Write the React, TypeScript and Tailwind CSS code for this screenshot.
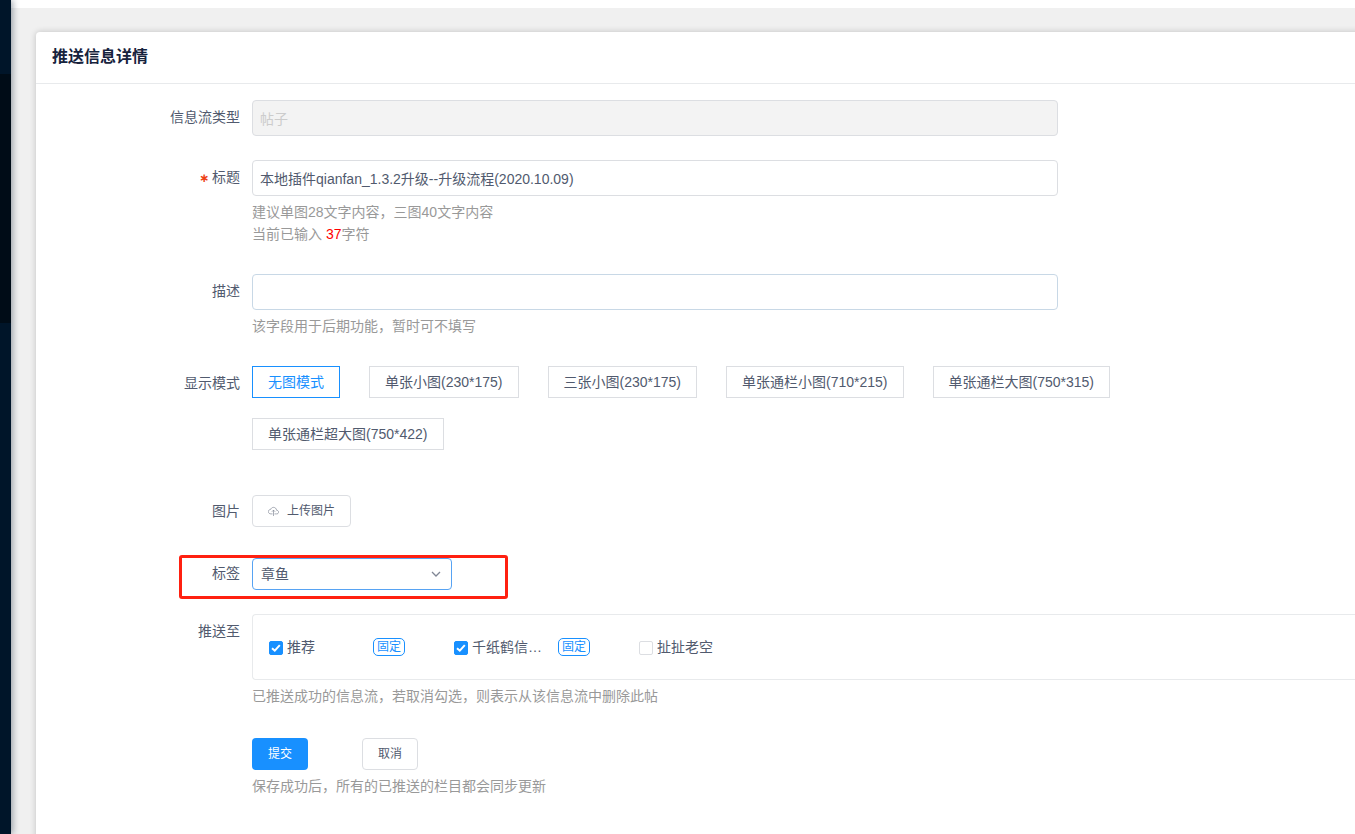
import { useState, type ReactNode } from "react";
import { IoCloudUploadOutline } from "react-icons/io5";

const DISPLAY_MODES = [
  "无图模式",
  "单张小图(230*175)",
  "三张小图(230*175)",
  "单张通栏小图(710*215)",
  "单张通栏大图(750*315)",
  "单张通栏超大图(750*422)",
];

const CHANNELS = [
  { id: "recommend", name: "推荐", pinned: true, checked: true },
  { id: "crane", name: "千纸鹤信…", pinned: true, checked: true },
  { id: "chat", name: "扯扯老空", pinned: false, checked: false },
];

type RowProps = {
  label?: string;
  htmlFor?: string;
  labelId?: string;
  required?: boolean;
  children: ReactNode;
};

function Row({ label, htmlFor, labelId, required, children }: RowProps) {
  return (
    <div className="flex gap-3">
      <div className="w-[204px] shrink-0 pt-2.5 text-right leading-[14px]">
        {required && (
          <span aria-hidden="true" className="mr-[3px] font-['DejaVu_Sans'] text-xs leading-[14px] font-bold text-[#ed4014]">
            ∗
          </span>
        )}
        {htmlFor ? (
          <label htmlFor={htmlFor}>{label}</label>
        ) : (
          <span id={labelId}>{label}</span>
        )}
      </div>
      <div className="min-w-0 flex-1">{children}</div>
    </div>
  );
}

function Help({ children }: { children: ReactNode }) {
  return <div className="pt-[5px] leading-[22px] text-[#999999]">{children}</div>;
}

function ChannelOption({ id, name, pinned, checked }: (typeof CHANNELS)[number]) {
  return (
    <div className="flex w-[185px] items-center">
      <div className="flex w-[104px] items-center gap-1">
        <span className="mt-0.5 grid size-3.5 shrink-0">
          <input
            id={id}
            type="checkbox"
            defaultChecked={checked}
            className="peer col-start-1 row-start-1 size-3.5 appearance-none rounded-[2px] border border-[#dcdee2] bg-white checked:border-[#1890ff] checked:bg-[#1890ff]"
          />
          <svg
            viewBox="0 0 14 14"
            className="pointer-events-none invisible col-start-1 row-start-1 size-3.5 peer-checked:visible"
            fill="none"
            stroke="#ffffff"
            strokeWidth="2"
          >
            <path d="M3 7.2 5.8 9.7 10.8 4.2" />
          </svg>
        </span>
        <label htmlFor={id} className="truncate leading-[22px]">
          {name}
        </label>
      </div>
      {pinned && (
        <span className="rounded-[5px] border border-[#1890ff] px-[3px] text-xs leading-4 text-[#1890ff]">
          固定
        </span>
      )}
    </div>
  );
}

export default function App() {
  const [mode, setMode] = useState(DISPLAY_MODES[0]);
  const [title, setTitle] = useState("本地插件qianfan_1.3.2升级--升级流程(2020.10.09)");

  return (
    <div className="flex min-h-screen overflow-hidden bg-[#f0f0f0] font-['Liberation_Sans','Noto_Sans_CJK_SC',sans-serif] text-sm text-[#515a6e]">
      <aside className="z-10 w-[11px] shrink-0 bg-[#001529] pt-[74px] shadow-[2px_0_6px_rgba(0,21,41,0.35)]">
        <div className="h-[249px] bg-[#000c17]" />
      </aside>

      <div className="flex min-w-0 flex-1 flex-col">
        <header className="h-2 bg-white" />

        <main className="-mr-2 flex flex-1 flex-col pt-6 pl-[25px]">
          <section className="-mb-2 flex-1 rounded-tl-[4px] bg-white shadow-[0_0_6px_rgba(0,0,0,0.2)]">
            <h1 className="border-b border-[#e8eaec] px-4 pt-[13px] pb-3.5 text-base leading-6 font-bold text-[#17233d]">
              推送信息详情
            </h1>

            <form className="pt-4 pb-9" onSubmit={(e) => e.preventDefault()}>
              <div className="flex flex-col gap-6">
                <Row label="信息流类型" htmlFor="feed-type">
                  <input
                    id="feed-type"
                    disabled
                    defaultValue="帖子"
                    className="block h-9 w-full max-w-[806px] rounded-[4px] border border-[#dcdee2] bg-[#f3f3f3] px-[7px] text-[#cccccc]"
                  />
                </Row>
                <Row label="标题" htmlFor="title" required>
                  <input
                    id="title"
                    value={title}
                    onChange={(e) => setTitle(e.target.value)}
                    className="block h-9 w-full max-w-[806px] rounded-[4px] border border-[#dcdee2] bg-white px-[7px]"
                  />
                  <Help>
                    建议单图28文字内容，三图40文字内容
                    <br />
                    当前已输入 <span className="text-[#ff0000]">37</span>字符
                  </Help>
                </Row>
              </div>

              <div className="mt-[29px] flex flex-col gap-[29px]">
                <Row label="描述" htmlFor="description">
                  <input
                    id="description"
                    className="block h-9 w-full max-w-[806px] rounded-[4px] border border-[#c8d8e6] bg-white px-[7px]"
                  />
                  <Help>该字段用于后期功能，暂时可不填写</Help>
                </Row>

                <Row label="显示模式" labelId="mode-label">
                  <div
                    role="group"
                    aria-labelledby="mode-label"
                    className="flex max-w-[1000px] flex-wrap gap-x-[29px] gap-y-5"
                  >
                    {DISPLAY_MODES.map((item) => (
                      <button
                        key={item}
                        type="button"
                        aria-pressed={item === mode}
                        onClick={() => setMode(item)}
                        className={
                          item === mode
                            ? "h-8 border border-[#1890ff] px-[15px] text-[#1890ff]"
                            : "h-8 border border-[#dcdee2] px-[15px]"
                        }
                      >
                        {item}
                      </button>
                    ))}
                  </div>
                </Row>
              </div>

              <div className="mt-11">
                <Row label="图片" labelId="image-label">
                  <div className="pt-px">
                    <button
                      type="button"
                      className="flex h-8 items-center gap-2 rounded-[4px] border border-[#dcdee2] px-[15px] text-xs"
                    >
                      <IoCloudUploadOutline className="size-[11px] text-[#808695]" />
                      上传图片
                    </button>
                  </div>
                </Row>
              </div>

              <div className="relative mt-[29px]">
                <Row label="标签" htmlFor="tag">
                  <div className="grid w-[200px] items-center pt-0.5">
                    <select
                      id="tag"
                      className="col-start-1 row-start-1 h-8 appearance-none rounded-[4px] border border-[#57a3f3] bg-white pr-6 pl-2"
                    >
                      <option>章鱼</option>
                    </select>
                    <svg
                      viewBox="0 0 14 14"
                      className="pointer-events-none col-start-1 row-start-1 mr-[9px] size-3.5 justify-self-end"
                      fill="none"
                      stroke="#808695"
                      strokeWidth="1.3"
                    >
                      <path d="M3 5 7 9 11 5" />
                    </svg>
                  </div>
                </Row>
                <div className="pointer-events-none absolute -top-px -bottom-[9px] left-[143px] w-[329px] rounded-[3px] border-3 border-[#ff2010]" />
              </div>

              <div className="mt-6">
                <Row label="推送至" labelId="push-label">
                  <div
                    role="group"
                    aria-labelledby="push-label"
                    className="flex h-[66px] items-center rounded-l-[4px] border border-r-0 border-[#e8eaec] pl-4"
                  >
                    {CHANNELS.map((channel) => (
                      <ChannelOption key={channel.id} {...channel} />
                    ))}
                  </div>
                  <Help>已推送成功的信息流，若取消勾选，则表示从该信息流中删除此帖</Help>
                </Row>
              </div>

              <div className="mt-[31px]">
                <Row>
                  <div className="flex gap-[54px] text-xs">
                    <button type="submit" className="h-8 w-14 rounded-[4px] bg-[#1890ff] text-white">
                      提交
                    </button>
                    <button type="button" className="h-8 w-14 rounded-[4px] border border-[#dcdee2]">
                      取消
                    </button>
                  </div>
                  <Help>保存成功后，所有的已推送的栏目都会同步更新</Help>
                </Row>
              </div>
            </form>
          </section>
        </main>
      </div>
    </div>
  );
}
